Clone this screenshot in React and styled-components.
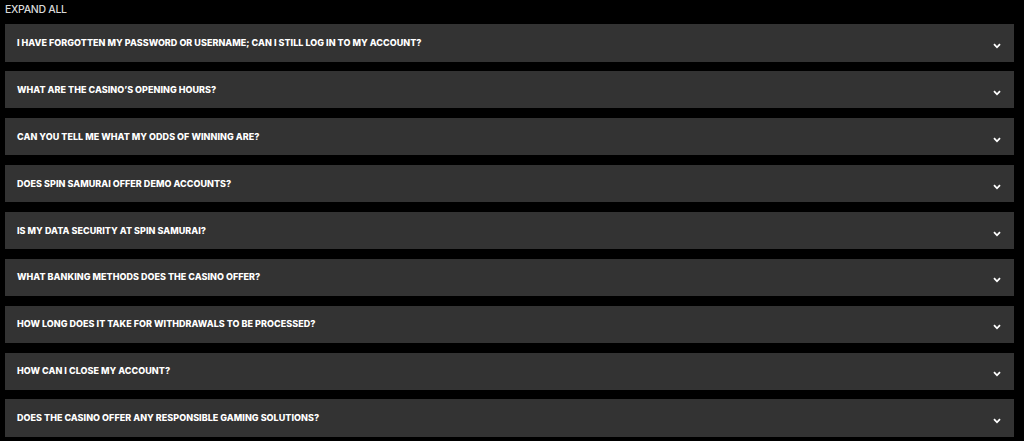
import React from 'react';
import styled, { createGlobalStyle } from 'styled-components';

const GlobalStyle = createGlobalStyle`
    html, body {
        margin: 0;
        padding: 0;
        background: #000;
    }
`;

const Page = styled.div`
    padding: 3px 10px 0 5px;
    font-family: Inter, "Noto Sans", sans-serif;
`;

const ExpandAll = styled.div`
    color: #d9d9d9;
    font-size: 10.5px;
    font-weight: 500;
    line-height: 14px;
    height: 21.3px;
    letter-spacing: -0.3px;
`;

const List = styled.div`
    display: flex;
    flex-direction: column;
    gap: 9.6px;
`;

const Item = styled.div`
    display: flex;
    align-items: center;
    justify-content: space-between;
    height: 37.3px;
    background: #333333;
    padding: 0 12px 0 12px;
    box-sizing: border-box;
`;

const Question = styled.div`
    color: #fff;
    font-size: 9px;
    font-weight: 800;
    text-transform: uppercase;
    letter-spacing: 0.03px;
    margin-top: -1px;
`;

const Chevron = styled.svg`
    width: 8px;
    height: 6px;
    margin-top: 6px;
    margin-right: 1px;
`;

const questions = [
    'I have forgotten my password or username; can I still log in to my account?',
    'What are the casino’s opening hours?',
    'Can you tell me what my odds of winning are?',
    'Does Spin Samurai offer demo accounts?',
    'Is my data security at Spin Samurai?',
    'What banking methods does the casino offer?',
    'How long does it take for withdrawals to be processed?',
    'How can I close my account?',
    'Does the casino offer any responsible gaming solutions?',
];

const App = () => {
    return (
        <Page>
            <GlobalStyle />
            <ExpandAll>EXPAND ALL</ExpandAll>
            <List>
                {questions.map((q) => (
                    <Item key={q}>
                        <Question>{q}</Question>
                        <Chevron viewBox="0 0 8 6">
                            <path d="M1 1.2 L4 4.3 L7 1.2" fill="none" stroke="#fff" strokeWidth="1.8" />
                        </Chevron>
                    </Item>
                ))}
            </List>
        </Page>
    );
};

export default App;
